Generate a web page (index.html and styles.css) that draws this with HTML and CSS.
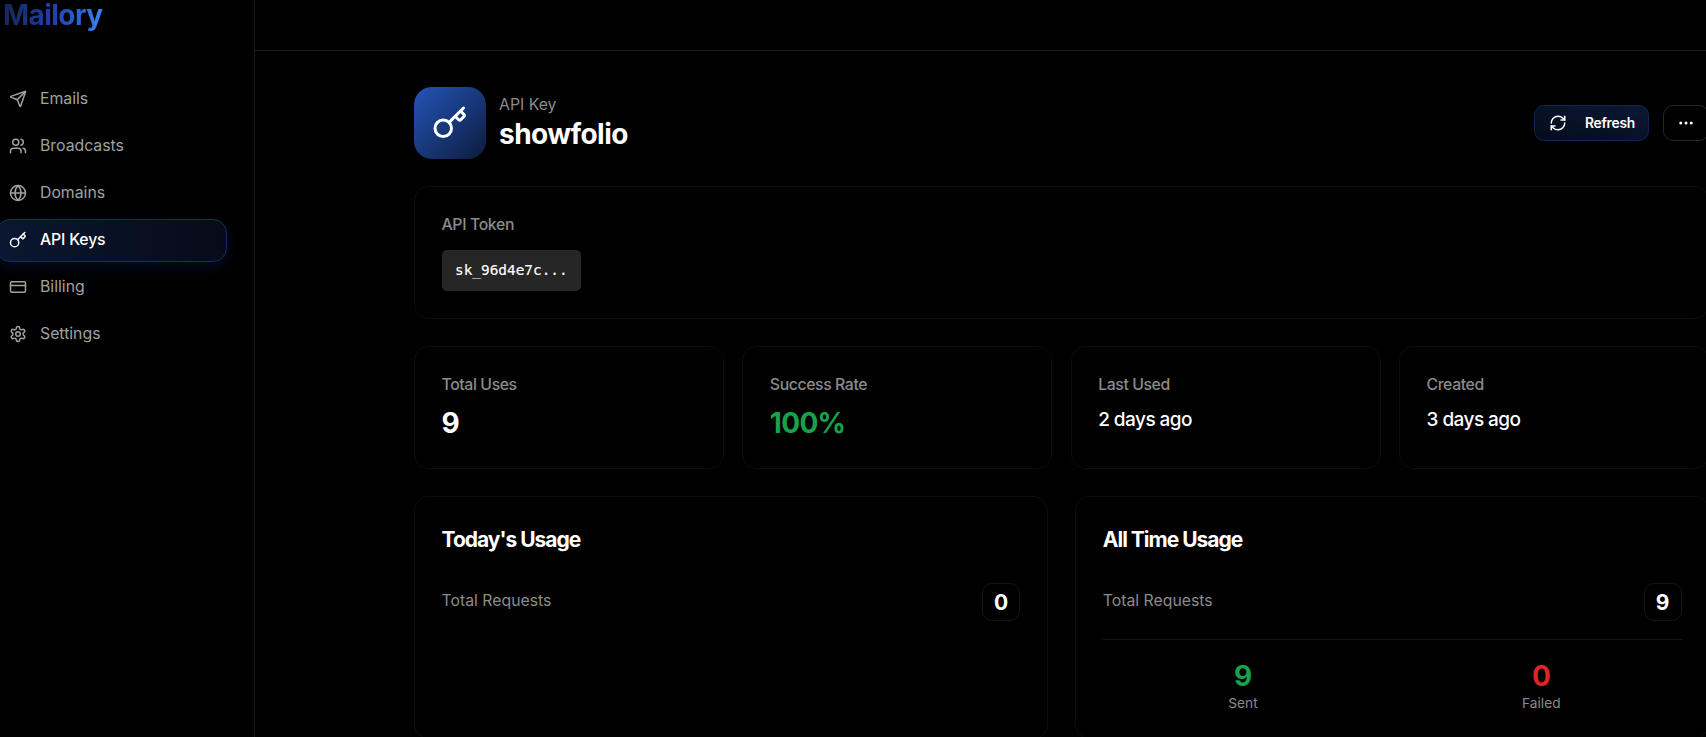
FILE: index.html
```html
<!DOCTYPE html>
<html lang="en">
<head>
<meta charset="utf-8">
<title>Mailory</title>
<link rel="stylesheet" href="styles.css">
</head>
<body>
<div class="app">
  <aside class="sidebar">
    <div class="brand"><span class="brand-name">Mailory</span></div>
    <nav class="nav">
      <a class="nav-item"><svg class="icon" viewBox="0 0 24 24"><path d="M14.536 21.686a.5.5 0 0 0 .937-.024l6.5-19a.496.496 0 0 0-.635-.635l-19 6.5a.5.5 0 0 0-.024.937l7.93 3.18a2 2 0 0 1 1.112 1.11z"/><path d="m21.854 2.147-10.94 10.939"/></svg><span>Emails</span></a>
      <a class="nav-item"><svg class="icon" viewBox="0 0 24 24"><path d="M16 21v-2a4 4 0 0 0-4-4H6a4 4 0 0 0-4 4v2"/><circle cx="9" cy="7" r="4"/><path d="M22 21v-2a4 4 0 0 0-3-3.87"/><path d="M16 3.13a4 4 0 0 1 0 7.75"/></svg><span>Broadcasts</span></a>
      <a class="nav-item"><svg class="icon" viewBox="0 0 24 24"><circle cx="12" cy="12" r="10"/><path d="M12 2a14.5 14.5 0 0 0 0 20 14.5 14.5 0 0 0 0-20"/><path d="M2 12h20"/></svg><span>Domains</span></a>
      <a class="nav-item active"><svg class="icon" viewBox="0 0 24 24"><path d="m15.5 7.5 2.3 2.3a1 1 0 0 0 1.4 0l2.1-2.1a1 1 0 0 0 0-1.4L19 4"/><path d="m21 2-9.6 9.6"/><circle cx="7.5" cy="15.5" r="5.5"/></svg><span>API Keys</span></a>
      <a class="nav-item"><svg class="icon" viewBox="0 0 24 24"><rect width="20" height="14" x="2" y="5" rx="2"/><path d="M2 10h20"/></svg><span>Billing</span></a>
      <a class="nav-item"><svg class="icon" viewBox="0 0 24 24"><path d="M12.22 2h-.44a2 2 0 0 0-2 2v.18a2 2 0 0 1-1 1.73l-.43.25a2 2 0 0 1-2 0l-.15-.08a2 2 0 0 0-2.73.73l-.22.38a2 2 0 0 0 .73 2.73l.15.1a2 2 0 0 1 1 1.72v.51a2 2 0 0 1-1 1.74l-.15.09a2 2 0 0 0-.73 2.73l.22.38a2 2 0 0 0 2.73.73l.15-.08a2 2 0 0 1 2 0l.43.25a2 2 0 0 1 1 1.73V20a2 2 0 0 0 2 2h.44a2 2 0 0 0 2-2v-.18a2 2 0 0 1 1-1.73l.43-.25a2 2 0 0 1 2 0l.15.08a2 2 0 0 0 2.73-.73l.22-.39a2 2 0 0 0-.73-2.73l-.15-.08a2 2 0 0 1-1-1.74v-.5a2 2 0 0 1 1-1.74l.15-.09a2 2 0 0 0 .73-2.73l-.22-.38a2 2 0 0 0-2.73-.73l-.15.08a2 2 0 0 1-2 0l-.43-.25a2 2 0 0 1-1-1.73V4a2 2 0 0 0-2-2z"/><circle cx="12" cy="12" r="3"/></svg><span>Settings</span></a>
    </nav>
  </aside>
  <div class="page">
    <header class="topbar"></header>
    <main class="content">
      <section class="heading">
        <div class="badge"><svg class="icon" viewBox="0 0 24 24"><path d="m15.5 7.5 2.3 2.3a1 1 0 0 0 1.4 0l2.1-2.1a1 1 0 0 0 0-1.4L19 4"/><path d="m21 2-9.6 9.6"/><circle cx="7.5" cy="15.5" r="5.5"/></svg></div>
        <div class="heading-text"><div class="kicker">API Key</div><h1 class="title">showfolio</h1></div>
        <div class="actions">
          <button class="btn refresh"><svg class="icon" viewBox="0 0 24 24"><path d="M3 12a9 9 0 0 1 9-9 9.75 9.75 0 0 1 6.74 2.74L21 8"/><path d="M21 3v5h-5"/><path d="M21 12a9 9 0 0 1-9 9 9.75 9.75 0 0 1-6.74-2.74L3 16"/><path d="M8 16H3v5"/></svg><span>Refresh</span></button>
          <button class="btn more"><svg class="icon" viewBox="0 0 24 24"><circle cx="12" cy="12" r="1"/><circle cx="19" cy="12" r="1"/><circle cx="5" cy="12" r="1"/></svg></button>
        </div>
      </section>
      <section class="card token-card"><div class="label">API Token</div><code class="token">sk_96d4e7c...</code></section>
      <section class="stats">
        <div class="card stat"><div class="label">Total Uses</div><div class="value">9</div></div>
        <div class="card stat"><div class="label">Success Rate</div><div class="value green">100%</div></div>
        <div class="card stat"><div class="label">Last Used</div><div class="when">2 days ago</div></div>
        <div class="card stat"><div class="label">Created</div><div class="when">3 days ago</div></div>
      </section>
      <section class="usage">
        <div class="card usage-card">
          <h2 class="subtitle">Today's Usage</h2>
          <div class="row"><span class="row-label">Total Requests</span><span class="count">0</span></div>
        </div>
        <div class="card usage-card">
          <h2 class="subtitle">All Time Usage</h2>
          <div class="row"><span class="row-label">Total Requests</span><span class="count">9</span></div>
          <div class="split">
            <div><div class="big green">9</div><div class="caption">Sent</div></div>
            <div><div class="big red">0</div><div class="caption">Failed</div></div>
          </div>
        </div>
      </section>
    </main>
  </div>
</div>
</body>
</html>
```
FILE: styles.css
```css
* { box-sizing: border-box; }
body { margin: 0; background: #000; color: #fff; font-family: Inter, "Liberation Sans", sans-serif; font-size: 15.8px; overflow: hidden; }
h1, h2 { margin: 0; }
.app { display: flex; width: 1710px; height: 737px; overflow: hidden; }
.icon { display: block; fill: none; stroke: currentColor; stroke-width: 2; stroke-linecap: round; stroke-linejoin: round; flex: none; width: 18px; height: 18px; }
.sidebar { width: 255px; flex: none; border-right: 1px solid #1b1b1b; }
.brand { height: 78px; padding-left: 3px; }
.brand-name { display: block; width: max-content; font-size: 28px; line-height: 30px; padding-bottom: 5px; font-weight: 700; letter-spacing: -0.55px; background: linear-gradient(90deg, #172554, #1d40b0 50%, #3b82f6); -webkit-background-clip: text; background-clip: text; color: transparent; }
.nav { display: flex; flex-direction: column; gap: 4px; margin-left: -4px; width: 231px; }
.nav-item { display: flex; align-items: center; gap: 13px; height: 43px; padding-left: 12px; border: 1px solid transparent; border-radius: 14px; color: #a1a1a1; }
.nav-item span { padding-bottom: 3px; }
.nav-item.active { color: #fff; font-weight: 500; letter-spacing: -0.15px; background: linear-gradient(90deg, #0a1730, #060b18); border-color: #162e63; box-shadow: 0 5px 14px rgba(29, 78, 216, .17); }
.nav-item .icon { margin-bottom: 2px; }
.page { flex: 1; }
.topbar { height: 51px; border-bottom: 1px solid #1b1b1b; }
.content { margin-left: 159px; width: 1295px; padding-top: 36px; }
.heading { display: flex; align-items: center; height: 72px; margin-bottom: 27px; }
.badge { width: 72px; height: 72px; border-radius: 18px; display: grid; place-items: center; background: linear-gradient(135deg, #2455b9, #0d1b3c); }
.badge .icon { width: 36px; height: 36px; }
.heading-text { margin-left: 13px; margin-top: -3px; }
.kicker { color: #8b8b8b; line-height: 23px; margin-bottom: 1px; }
.title { font-size: 28px; line-height: 34px; font-weight: 700; letter-spacing: -0.55px; }
.actions { display: flex; gap: 14px; margin-left: auto; }
.btn { font: 500 14px Inter, sans-serif; color: #fff; height: 36px; border-radius: 10px; display: flex; align-items: center; }
.refresh { width: 115px; padding: 0 0 0 14px; gap: 18px; letter-spacing: -0.25px; font-weight: 600; border: 1px solid #10254f; background: linear-gradient(15deg, #050c1a, #0a1836); }
.refresh span { font-size: 13.8px; padding-bottom: 1px; }
.more { width: 46px; padding: 0; justify-content: center; background: #000; border: 1px solid #262626; }
.card { border: 1px solid #0d0d0d; border-radius: 14px; background: #000; padding: 27px 26.5px; }
.label { line-height: 22px; color: #8b8b8b; font-weight: 500; letter-spacing: -0.4px; }
.token-card { height: 133px; margin-bottom: 27px; }
.token-card .label { letter-spacing: -0.35px; }
.token { display: inline-block; margin-top: 14px; height: 41px; padding: 0 13.5px; line-height: 40px; border-radius: 5px; background: #262626; font-family: "DejaVu Sans Mono", monospace; font-size: 14.4px; -webkit-text-stroke: 0.15px #fff; }
.stats { display: grid; grid-template-columns: repeat(4, 1fr); gap: 18.4px; margin-bottom: 27px; }
.stat { height: 123px; }
.value { font-size: 28px; line-height: 38px; margin-top: 8px; font-weight: 700; letter-spacing: -0.7px; }
.when { font-size: 19px; line-height: 28px; margin-top: 10px; font-weight: 500; letter-spacing: -0.55px; }
.green { color: #16a34a; }
.red { color: #dc2626; }
.usage { display: grid; grid-template-columns: 1fr 1fr; gap: 27.6px; }
.usage-card { height: 243px; }
.subtitle { font-size: 21px; line-height: 32px; font-weight: 700; letter-spacing: -1px; }
.row { display: flex; align-items: center; justify-content: space-between; height: 38px; margin-top: 27px; color: #8b8b8b; }
.row-label { padding-bottom: 3px; }
.count { width: 38px; height: 38px; border: 1px solid #161616; border-radius: 10px; display: grid; place-items: center; color: #fff; font-size: 21px; font-weight: 700; }
.split { display: grid; grid-template-columns: 1fr 1fr; gap: 18px; margin-top: 18px; padding-top: 18px; border-top: 1px solid #161616; text-align: center; }
.big { font-size: 28px; line-height: 36px; font-weight: 700; }
.caption { font-size: 13.7px; line-height: 19px; color: #8b8b8b; }
```
